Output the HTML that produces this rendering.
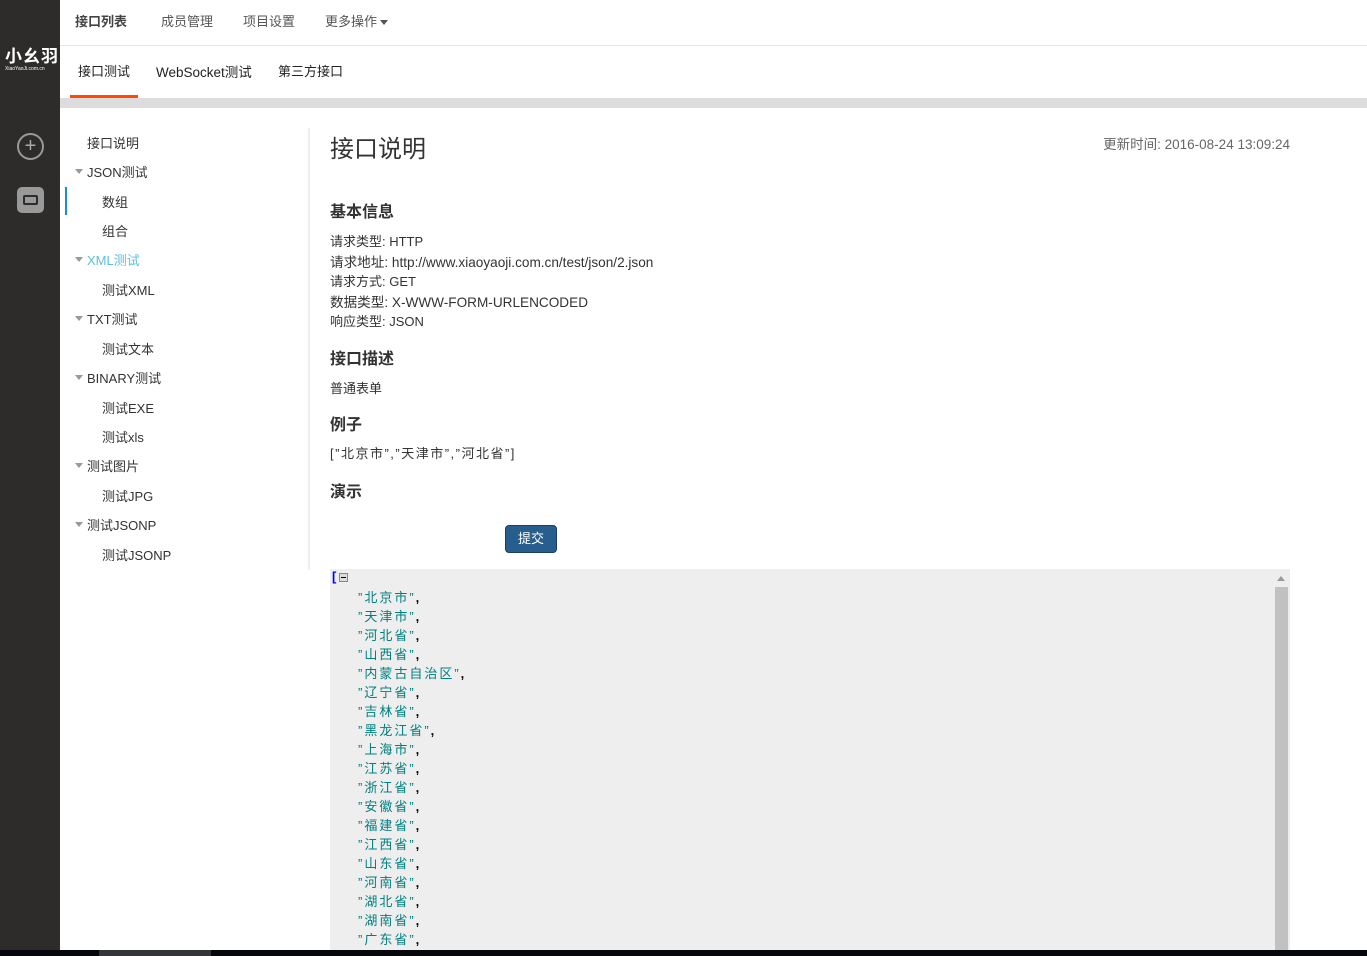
<!DOCTYPE html>
<html><head><meta charset="utf-8"><style>
*{margin:0;padding:0;box-sizing:border-box}
body{width:1367px;height:956px;overflow:hidden;background:#fff;font-family:"Liberation Sans","Noto Sans CJK SC",sans-serif;color:#333;position:relative;font-size:13px}
.abs{position:absolute}
#side{left:0;top:0;width:60px;height:950px;background:#2d2c2a}
#top{left:60px;top:0;right:0;height:46px;border-bottom:1px solid #e5e5e5}
#tabs span{position:absolute;top:61px;font-size:13px;color:#222}
.tree{position:absolute;font-size:13px;color:#333;margin-top:-2px}
.caret{position:absolute;width:0;height:0;border-left:4px solid transparent;border-right:4px solid transparent;border-top:5px solid #999}
.c{position:absolute;left:330px;font-size:13px;color:#333;margin-top:-2px}
.c.w{font-size:13.6px}
h3{position:absolute;left:330px;font-size:16px;font-weight:bold;color:#333;margin-top:-3px}
.j{position:absolute;left:358px;font-size:13px;color:#00807f;letter-spacing:2px;margin-top:-2px}
.j b{color:#000}
</style></head><body>
<div id="side" class="abs">
 <div class="abs" style="left:5px;top:42px;color:#fff;font-size:17px;font-weight:bold;letter-spacing:1px">小幺羽</div>
 <div class="abs" style="left:5px;top:66px;color:#fff;font-size:5px">XiaoYaoJi.com.cn</div>
 <div class="abs" style="left:17px;top:133px;width:27px;height:27px;border:2px solid #999;border-radius:50%;color:#aaa;font-size:20px;line-height:22px;text-align:center">+</div>
 <div class="abs" style="left:17px;top:187px;width:27px;height:26px;background:#999;border-radius:5px"><div class="abs" style="left:6px;top:8px;width:15px;height:10px;border:2px solid #2d2c2a;border-radius:2px"></div></div>
</div>
<div id="top" class="abs"></div>
<div class="abs" style="left:75px;top:11px;font-size:13px;font-weight:bold;color:#444">接口列表</div>
<div class="abs" style="left:161px;top:11px;font-size:13px;color:#555">成员管理</div>
<div class="abs" style="left:243px;top:11px;font-size:13px;color:#555">项目设置</div>
<div class="abs" style="left:325px;top:11px;font-size:13px;color:#555">更多操作<span style="display:inline-block;width:0;height:0;border-left:4px solid transparent;border-right:4px solid transparent;border-top:5px solid #555;margin-left:3px;vertical-align:middle"></span></div>
<div id="tabs">
 <span style="left:78px">接口测试</span><span style="left:156px;font-size:13.5px">WebSocket测试</span><span style="left:278px">第三方接口</span>
</div>
<div class="abs" style="left:70px;top:95px;width:68px;height:3px;background:#ff4a00"></div>
<div class="abs" style="left:60px;top:98px;right:0;height:10px;background:#ddd"></div>
<div class="abs" style="left:308px;top:128px;width:2px;height:442px;background:#eee"></div>
<div class="tree" style="left:87px;top:135px">接口说明</div>
<div class="caret" style="left:75px;top:169px"></div><div class="tree" style="left:87px;top:164px">JSON测试</div>
<div class="abs" style="left:65px;top:187px;width:2px;height:28px;background:#1a8ed6"></div>
<div class="tree" style="left:102px;top:194px">数组</div>
<div class="tree" style="left:102px;top:223px">组合</div>
<div class="caret" style="left:75px;top:257px"></div><div class="tree" style="left:87px;top:252px;color:#5bc0de">XML测试</div>
<div class="tree" style="left:102px;top:282px">测试XML</div>
<div class="caret" style="left:75px;top:316px"></div><div class="tree" style="left:87px;top:311px">TXT测试</div>
<div class="tree" style="left:102px;top:341px">测试文本</div>
<div class="caret" style="left:75px;top:375px"></div><div class="tree" style="left:87px;top:370px">BINARY测试</div>
<div class="tree" style="left:102px;top:400px">测试EXE</div>
<div class="tree" style="left:102px;top:429px">测试xls</div>
<div class="caret" style="left:75px;top:463px"></div><div class="tree" style="left:87px;top:458px">测试图片</div>
<div class="tree" style="left:102px;top:488px">测试JPG</div>
<div class="caret" style="left:75px;top:522px"></div><div class="tree" style="left:87px;top:517px">测试JSONP</div>
<div class="tree" style="left:102px;top:547px">测试JSONP</div>

<div class="abs" style="left:330px;top:129px;font-size:24px;color:#333">接口说明</div>
<div class="abs" style="right:77px;top:133px;font-size:13.5px;color:#666">更新时间: 2016-08-24 13:09:24</div>
<h3 style="top:201px">基本信息</h3>
<div class="c" style="top:233px">请求类型: HTTP</div>
<div class="c w" style="top:253px">请求地址: http://www.xiaoyaoji.com.cn/test/json/2.json</div>
<div class="c" style="top:273px">请求方式: GET</div>
<div class="c w" style="top:293px">数据类型: X-WWW-FORM-URLENCODED</div>
<div class="c" style="top:313px">响应类型: JSON</div>
<h3 style="top:348px">接口描述</h3>
<div class="c" style="top:380px">普通表单</div>
<h3 style="top:414px">例子</h3>
<div class="c" style="top:445px;letter-spacing:1.5px">[”北京市”,”天津市”,”河北省”]</div>
<h3 style="top:481px">演示</h3>
<div class="abs" style="left:505px;top:525px;width:52px;height:28px;background:#285e8e;border:1px solid #1d3f5e;border-radius:4px;color:#fff;font-size:13px;line-height:26px;text-align:center">提交</div>

<div class="abs" style="left:330px;top:569px;width:960px;height:381px;background:#eee"></div>
<div class="abs" style="left:1275px;top:587px;width:13px;height:363px;background:#c1c1c1"></div>
<div class="abs" style="left:1277px;top:576px;width:0;height:0;border-left:4px solid transparent;border-right:4px solid transparent;border-bottom:5px solid #999"></div>
<div class="abs" style="left:332px;top:569px;color:#00f;font-weight:bold;font-size:13px">[</div>
<div class="abs" style="left:339px;top:573px;width:9px;height:9px;border:1px solid #888;background:#ddd"><div style="margin:3px 1px;height:1px;background:#000"></div></div>
<div class="j" style="top:589px">”北京市”<b>,</b></div>
<div class="j" style="top:608px">”天津市”<b>,</b></div>
<div class="j" style="top:627px">”河北省”<b>,</b></div>
<div class="j" style="top:646px">”山西省”<b>,</b></div>
<div class="j" style="top:665px">”内蒙古自治区”<b>,</b></div>
<div class="j" style="top:684px">”辽宁省”<b>,</b></div>
<div class="j" style="top:703px">”吉林省”<b>,</b></div>
<div class="j" style="top:722px">”黑龙江省”<b>,</b></div>
<div class="j" style="top:741px">”上海市”<b>,</b></div>
<div class="j" style="top:760px">”江苏省”<b>,</b></div>
<div class="j" style="top:779px">”浙江省”<b>,</b></div>
<div class="j" style="top:798px">”安徽省”<b>,</b></div>
<div class="j" style="top:817px">”福建省”<b>,</b></div>
<div class="j" style="top:836px">”江西省”<b>,</b></div>
<div class="j" style="top:855px">”山东省”<b>,</b></div>
<div class="j" style="top:874px">”河南省”<b>,</b></div>
<div class="j" style="top:893px">”湖北省”<b>,</b></div>
<div class="j" style="top:912px">”湖南省”<b>,</b></div>
<div class="j" style="top:931px">”广东省”<b>,</b></div>
<div class="abs" style="left:0;top:950px;width:1367px;height:6px;background:#05070c"></div>
<div class="abs" style="left:99px;top:950px;width:112px;height:6px;background:#333538"></div>
</body></html>
